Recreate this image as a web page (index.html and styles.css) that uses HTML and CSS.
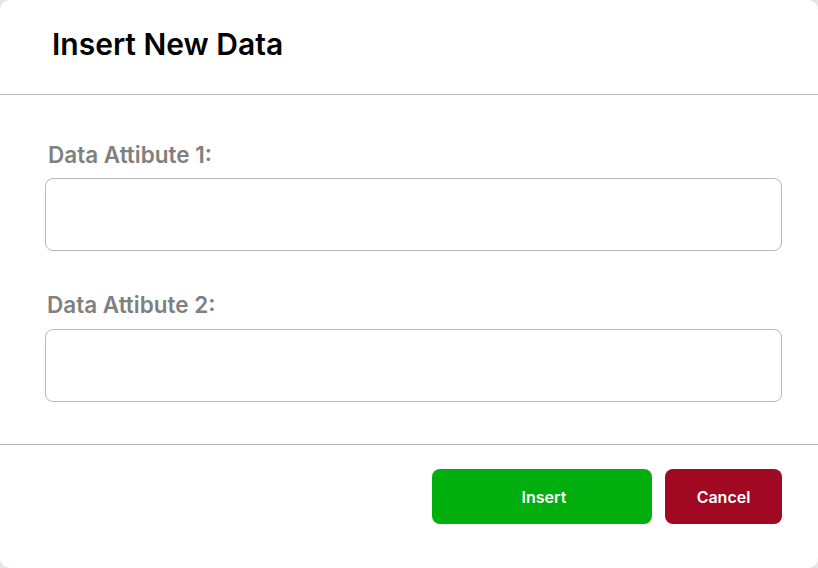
FILE: index.html
```html
<!DOCTYPE html>
<html>
<head>
<meta charset="utf-8">
<link rel="stylesheet" href="styles.css">
</head>
<body>
<div class="modal">
  <div class="modal-header">
    <h1 class="title">Insert New Data</h1>
  </div>
  <div class="modal-body">
    <div class="field">
      <label class="label">Data Attibute 1:</label>
      <input class="input" type="text">
    </div>
    <div class="field second">
      <label class="label">Data Attibute 2:</label>
      <input class="input" type="text">
    </div>
  </div>
  <div class="modal-footer">
    <button class="btn btn-insert">Insert</button>
    <button class="btn btn-cancel">Cancel</button>
  </div>
</div>
</body>
</html>
```

FILE: styles.css
```css
* { box-sizing: border-box; }
html, body { margin: 0; padding: 0; }
body {
  background: #e6e6e6;
  font-family: Inter, "Noto Sans", sans-serif;
  width: 818px;
  height: 568px;
  overflow: hidden;
}
.modal {
  width: 818px;
  height: 568px;
  background: #fff;
  border-radius: 10px;
  display: flex;
  flex-direction: column;
}
.modal-header {
  height: 95px;
  border-bottom: 1px solid #b5b5b5;
  display: flex;
  align-items: center;
  padding-left: 52px;
  padding-bottom: 6px;
}
.title {
  margin: 0;
  font-size: 30px;
  line-height: 36px;
  font-weight: 600;
  color: #000;
}
.modal-body {
  padding: 46px 36px 42px 45px;
  display: flex;
  flex-direction: column;
  border-bottom: 1px solid #b5b5b5;
}
.field {
  display: flex;
  flex-direction: column;
  gap: 10px;
}
.field.second { margin-top: 40px; gap: 11px; }
.label {
  font-size: 22.5px;
  line-height: 27px;
  font-weight: 600;
  color: #808080;
  padding-left: 3px;
}
.field.second .label { padding-left: 2px; }
.input {
  height: 73px;
  width: 100%;
  border: 1px solid #b8b8b8;
  border-radius: 8px;
  background: #fff;
  outline: none;
}
.modal-footer {
  display: flex;
  justify-content: flex-end;
  gap: 13px;
  padding: 24px 36px 0 0;
}
.btn {
  height: 55px;
  border: none;
  border-radius: 8px;
  color: #fff;
  font-family: Inter, "Noto Sans", sans-serif;
  font-size: 16px;
  font-weight: 600;
  padding: 0;
}
.btn-insert { width: 220px; background: #00ae0d; padding-left: 4px; }
.btn-cancel { width: 117px; background: #a10822; }
```
